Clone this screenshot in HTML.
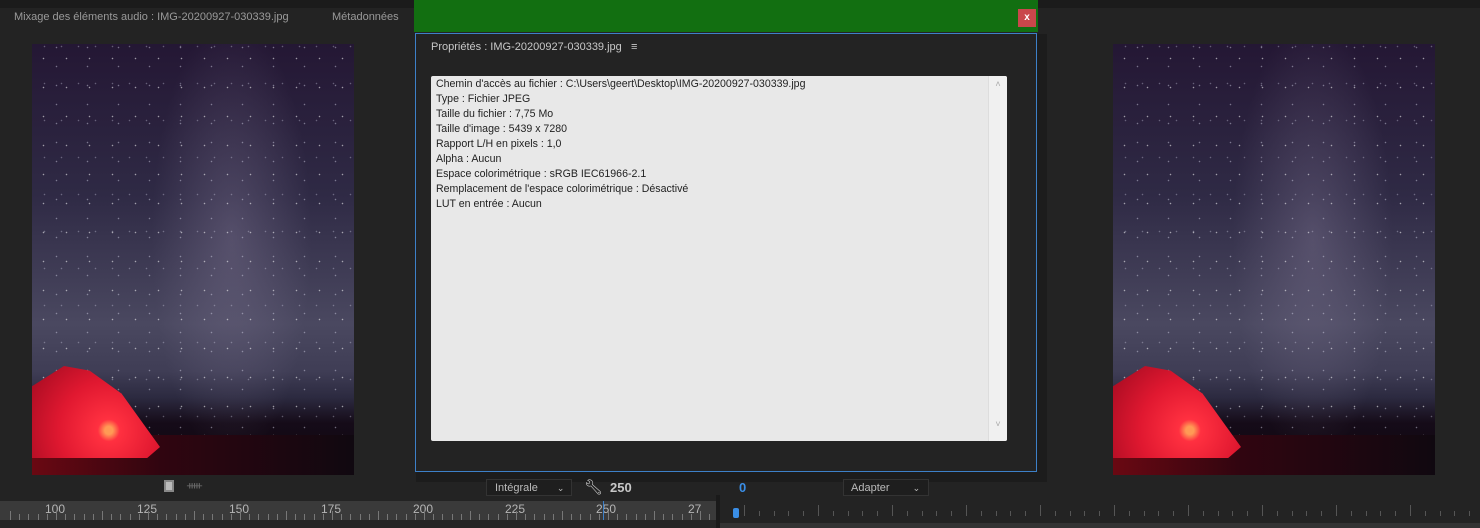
<!DOCTYPE html>
<html><head><meta charset="utf-8"><style>
*{margin:0;padding:0;box-sizing:border-box}
body{width:1480px;height:528px;overflow:hidden;background:#232323;font-family:"Liberation Sans",sans-serif;position:relative;color:#aaa}
.abs{position:absolute}
.topstrip{left:0;top:0;width:1480px;height:8px;background:#1b1b1b}
.img{position:absolute;width:322px;height:431px;overflow:hidden;
background:
radial-gradient(circle,rgba(255,255,255,.55) 0.5px,transparent 1px) 0 0/23px 29px,
radial-gradient(circle,rgba(220,220,240,.45) 0.5px,transparent 1px) 9px 13px/31px 19px,
radial-gradient(circle,rgba(220,220,240,.35) 0.5px,transparent 1px) 4px 21px/17px 37px,
radial-gradient(ellipse 80px 220px at 62% 45%,rgba(140,130,160,.35),transparent),
linear-gradient(180deg,#241734 0%,#2f2a45 35%,#4a4860 65%,#3f3d55 76%,#2c2a40 82%,#150b18 88%,#100810 100%)}
.img .ground{position:absolute;left:0;bottom:0;width:100%;height:40px;background:linear-gradient(90deg,#6a0812,#300510 40%,#100810)}
.img .tent{position:absolute;left:0;top:322px;width:128px;height:92px;background:radial-gradient(circle at 60% 70%,#ff9a55 4px,#ff3040 11px,#e01830 50%,#a00a20);clip-path:polygon(0 22%,25% 0,45% 5%,70% 30%,100% 88%,90% 100%,0 100%)}
.ttl{font-size:11px;color:#9a9a9a;top:11px}
.dlgbar{left:414px;top:0;width:624px;height:32px;background:#126f11}
.close{left:1018px;top:9px;width:18px;height:18px;background:#c9474b;color:#fff;font-size:10px;text-align:center;line-height:17px;font-weight:bold}
.shadow{left:416px;top:34px;width:631px;height:448px;background:#1c1c1c}
.panel{left:415px;top:33px;width:622px;height:439px;background:#232323;border:1px solid #3d80c8}
.box{left:431px;top:76px;width:576px;height:365px;background:#e8e8e8;border-radius:2px}
.sb{left:988px;top:76px;width:19px;height:365px;background:#f0f0f0;border-left:1px solid #ddd;border-radius:0 2px 2px 0;color:#aaa;font-size:9px;text-align:center}
.txt{left:436px;top:77px;font-size:10.6px;line-height:15px;color:#222;white-space:pre}
.ruler{left:0;top:501px;width:716px;height:19px;background:#3a3a3a}
.rl{position:absolute;top:502px;font-size:12px;color:#b5b5b5}
.tick{position:absolute;width:1px;background:#777}
</style></head><body>
<div class="abs topstrip"></div>
<div class="abs ttl" style="left:14px">Mixage des éléments audio : IMG-20200927-030339.jpg</div>
<div class="abs ttl" style="left:332px">Métadonnées</div>

<div class="img" style="left:32px;top:44px"><div class="ground"></div><div class="tent"></div></div>
<div class="img" style="left:1113px;top:44px"><div class="ground"></div><div class="tent"></div></div>

<div class="abs shadow"></div>
<div class="abs dlgbar"></div>
<div class="abs close">x</div>
<div class="abs panel"></div>
<div class="abs" style="left:431px;top:41px;font-size:11px;color:#c8c8c8">Propriétés : IMG-20200927-030339.jpg&nbsp;&nbsp;&nbsp;≡</div>
<div class="abs box"></div>
<div class="abs sb"><div style="margin-top:3px">˄</div><div style="margin-top:330px">˅</div></div>
<div class="abs txt">Chemin d'accès au fichier : C:\Users\geert\Desktop\IMG-20200927-030339.jpg
Type : Fichier JPEG
Taille du fichier : 7,75 Mo
Taille d'image : 5439 x 7280
Rapport L/H en pixels : 1,0
Alpha : Aucun
Espace colorimétrique : sRGB IEC61966-2.1
Remplacement de l'espace colorimétrique : Désactivé
LUT en entrée : Aucun</div>

<div class="abs" style="left:164px;top:480px;width:10px;height:12px;background:#bbb;border:2px solid #888"></div>
<div class="abs" style="left:187px;top:479px;font-size:11px;color:#666">ᚔ</div>
<div class="abs" style="left:486px;top:479px;width:86px;height:17px;background:#1e1e1e;border:1px solid #333;font-size:11px;color:#bbb;padding:2px 0 0 8px">Intégrale <span style="margin-left:16px;font-size:9px">⌄</span></div>
<div class="abs" style="left:584px;top:478px;font-size:15px;color:#ccc">🔧︎</div>
<div class="abs" style="left:610px;top:480px;font-size:13px;color:#c8c8c8;font-weight:bold">250</div>
<div class="abs" style="left:739px;top:480px;font-size:13px;color:#3a8ee6;font-weight:bold">0</div>
<div class="abs" style="left:843px;top:479px;width:86px;height:17px;background:#1e1e1e;border:1px solid #333;font-size:11px;color:#bbb;padding:2px 0 0 7px">Adapter <span style="margin-left:20px;font-size:9px">⌄</span></div>

<div class="abs ruler"></div>
<div class="rl" style="left:45px">100</div><div class="rl" style="left:137px">125</div><div class="rl" style="left:229px">150</div><div class="rl" style="left:321px">175</div><div class="rl" style="left:413px">200</div><div class="rl" style="left:505px">225</div><div class="rl" style="left:596px">250</div><div class="rl" style="left:688px">27</div>
<div class="abs" style="left:603px;top:501px;width:1px;height:19px;background:#3d80c8"></div>
<div class="abs" style="left:0;top:520px;width:716px;height:8px;background:#262626"></div>
<div class="abs" style="left:716px;top:495px;width:4px;height:33px;background:#1a1a1a"></div>
<div class="abs" style="left:733px;top:508px;width:6px;height:10px;background:#3a8ee6;border-radius:2px"></div>
<div class="abs" style="left:720px;top:523px;width:760px;height:5px;background:#333"></div>
<div id="ticks"></div>
<script>
var h='';
for(var x=10;x<716;x+=9.2){var big=Math.round((x-10)/9.2)%5==0;h+='<div class="tick" style="left:'+Math.round(x)+'px;top:'+(big?511:514)+'px;height:'+(big?9:6)+'px"></div>';}
for(var x=744;x<1480;x+=14.8){var big=Math.round((x-744)/14.8)%5==0;h+='<div class="tick" style="background:#555;left:'+Math.round(x)+'px;top:'+(big?505:511)+'px;height:'+(big?11:5)+'px"></div>';}
document.getElementById('ticks').innerHTML=h;
</script>
</body></html>
